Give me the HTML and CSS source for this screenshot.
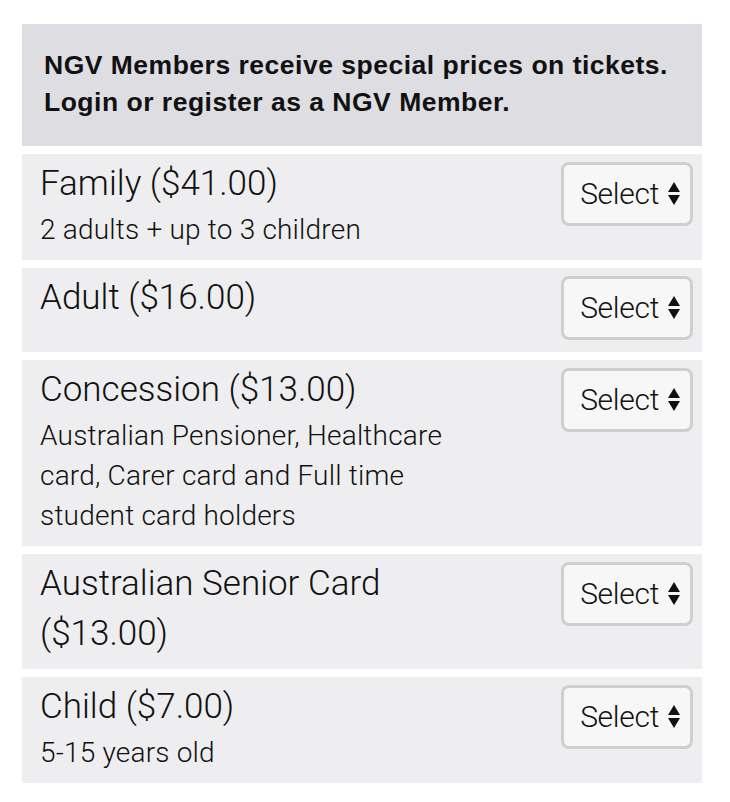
FILE: index.html
```html
<!DOCTYPE html>
<html lang="en">
<head>
<meta charset="utf-8">
<title>Tickets</title>
<link rel="stylesheet" href="styles.css">
</head>
<body>
<div class="tickets">
  <div class="banner">NGV Members receive special prices on tickets.<br>Login or register as a NGV Member.</div>

  <div class="row">
    <div class="info">
      <div class="title">Family ($41.00)</div>
      <div class="sub">2 adults + up to 3 children</div>
    </div>
    <div class="select"><span>Select</span><span class="arrows"><i class="up"></i><i class="down"></i></span></div>
  </div>

  <div class="row">
    <div class="info">
      <div class="title">Adult ($16.00)</div>
    </div>
    <div class="select"><span>Select</span><span class="arrows"><i class="up"></i><i class="down"></i></span></div>
  </div>

  <div class="row">
    <div class="info">
      <div class="title">Concession ($13.00)</div>
      <div class="sub">Australian Pensioner, Healthcare<br>card, Carer card and Full time<br>student card holders</div>
    </div>
    <div class="select"><span>Select</span><span class="arrows"><i class="up"></i><i class="down"></i></span></div>
  </div>

  <div class="row">
    <div class="info">
      <div class="title">Australian Senior Card<br>($13.00)</div>
    </div>
    <div class="select"><span>Select</span><span class="arrows"><i class="up"></i><i class="down"></i></span></div>
  </div>

  <div class="row">
    <div class="info">
      <div class="title">Child ($7.00)</div>
      <div class="sub">5-15 years old</div>
    </div>
    <div class="select"><span>Select</span><span class="arrows"><i class="up"></i><i class="down"></i></span></div>
  </div>
</div>
</body>
</html>
```
FILE: styles.css
```css
html, body {
  margin: 0;
  padding: 0;
  background: #ffffff;
}
body {
  padding: 24px 28px 0 22px;
  font-family: Roboto, "Liberation Sans", sans-serif;
  color: #111111;
}
.tickets {
  display: flex;
  flex-direction: column;
  gap: 8px;
  width: 680px;
}
.banner {
  background: #dedde2;
  padding: 23px 22px 25px 22px;
  font-family: "Liberation Sans", Arial, sans-serif;
  font-weight: bold;
  font-size: 26.5px;
  letter-spacing: 0.5px;
  line-height: 37px;
}
.row {
  background: #eeeef0;
  display: flex;
  justify-content: space-between;
  align-items: flex-start;
  padding: 5px 9px 10px 18px;
}
.title {
  font-weight: 300;
  font-size: 35px;
  line-height: 50px;
}
.sub {
  margin-top: 1px;
  font-weight: 300;
  font-size: 28px;
  letter-spacing: 0.2px;
  line-height: 40px;
}
.select {
  margin-top: 3px;
  margin-bottom: 2px;
  box-sizing: border-box;
  width: 132px;
  height: 64px;
  border: 3px solid #cfcfcf;
  border-radius: 8px;
  background: #f7f7f7;
  display: flex;
  align-items: center;
  justify-content: flex-end;
  gap: 9px;
  padding: 0 10px 2px 0;
  font-weight: 300;
  font-size: 30px;
  letter-spacing: -0.3px;
}
.arrows {
  display: flex;
  flex-direction: column;
  gap: 3px;
}
.arrows i {
  display: block;
  width: 0;
  height: 0;
  border-left: 6px solid transparent;
  border-right: 6px solid transparent;
}
.arrows .up {
  border-bottom: 10px solid #111;
}
.arrows .down {
  border-top: 10px solid #111;
}
```
